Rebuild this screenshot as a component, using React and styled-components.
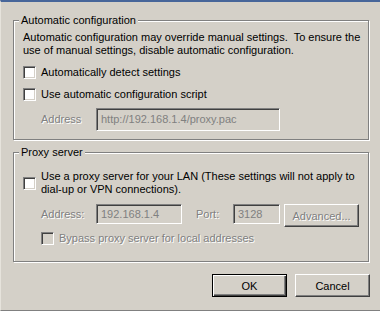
import React from "react";
import styled, { createGlobalStyle, css } from "styled-components";

const GlobalStyle = createGlobalStyle`
  html, body { margin: 0; padding: 0; background: #d4d0c8; }
  body { font-family: "Liberation Sans", Arial, sans-serif; font-size: 11px; color: #000; }
`;

const Window = styled.div`
  box-sizing: border-box;
  width: 380px;
  height: 311px;
  background: #d4d0c8;
  border-top: 2px solid #47669a;
  border-left: 1px solid #e6e3dc;
  border-bottom: 1px solid #808080;
  padding: 18px 10px 0 12px;
  display: flex;
  flex-direction: column;
`;

const Group = styled.div`
  position: relative;
  box-sizing: border-box;
  margin-right: 1px;
  border: 1px solid #808080;
  box-shadow: 1px 1px 0 #fff, inset 1px 1px 0 #fff;
  padding: ${(p) => p.$pad};
  margin-bottom: ${(p) => p.$mb || "0"};
  display: flex;
  flex-direction: column;
`;

const Legend = styled.span`
  position: absolute;
  top: -7px;
  left: 5px;
  padding: 0 2px;
  background: #d4d0c8;
  line-height: 13px;
`;

const Description = styled.p`
  margin: 0;
  line-height: 13px;
  white-space: pre;
`;

const CheckRow = styled.label`
  display: flex;
  align-items: center;
  margin-left: ${(p) => p.$indent || "0"};
  margin-top: ${(p) => p.$mt || "0"};
`;

const CheckBox = styled.span`
  box-sizing: border-box;
  flex: none;
  width: 13px;
  height: 13px;
  border: 1px solid;
  border-color: #808080 #fff #fff #808080;
  box-shadow: inset 1px 1px 0 #404040, inset -1px -1px 0 #d4d0c8;
  background: ${(p) => (p.$disabled ? "#d4d0c8" : "#fff")};
  margin-right: 5px;
`;

const disabledText = css`
  color: #808080;
  text-shadow: 1px 1px 0 #fff;
`;

const Label = styled.span`
  line-height: 13px;
  white-space: pre;
  ${(p) => p.$disabled && disabledText}
`;

const FieldRow = styled.div`
  display: flex;
  align-items: flex-start;
  margin-left: ${(p) => p.$indent || "0"};
  margin-top: ${(p) => p.$mt || "0"};
`;

const FieldLabel = styled.span`
  flex: none;
  width: ${(p) => p.$width};
  height: ${(p) => p.$h};
  line-height: ${(p) => p.$h};
  margin-left: ${(p) => p.$ml || "0"};
  ${disabledText}
`;

const TextBox = styled.div`
  box-sizing: border-box;
  flex: none;
  width: ${(p) => p.$width};
  height: ${(p) => p.$h};
  border: 1px solid;
  border-color: #808080 #fff #fff #808080;
  box-shadow: inset 1px 1px 0 #404040, inset -1px -1px 0 #d4d0c8;
  background: #d4d0c8;
  color: #808080;
  padding-left: 4px;
  line-height: ${(p) => `calc(${p.$h} - 2px)`};
  white-space: pre;
  overflow: hidden;
`;

const Button = styled.button`
  box-sizing: border-box;
  flex: none;
  width: 75px;
  height: 23px;
  margin: 0;
  margin-left: ${(p) => p.$ml || "0"};
  padding: 0;
  font: inherit;
  font-size: 11px;
  background: #d4d0c8;
  color: #000;
  ${(p) =>
    p.$default
      ? css`
          border: 1px solid #000;
          box-shadow: inset 1px 1px 0 #fff, inset -1px -1px 0 #404040,
            inset -2px -2px 0 #808080;
        `
      : css`
          border: 1px solid;
          border-color: #fff #404040 #404040 #fff;
          box-shadow: inset -1px -1px 0 #808080;
        `}
  ${(p) => p.$disabled && disabledText}
`;

const ButtonBar = styled.div`
  display: flex;
  justify-content: flex-end;
  margin-top: 12px;
`;

export default function App() {
  return (
    <>
      <GlobalStyle />
      <Window>
        <Group $pad="10px 9px 8px 9px" $mb="12px">
          <Legend>Automatic configuration</Legend>
          <Description>
            {"Automatic configuration may override manual settings.  To ensure the"}
            <br />
            {"use of manual settings, disable automatic configuration."}
          </Description>
          <CheckRow $mt="9px">
            <CheckBox />
            <Label>Automatically detect settings</Label>
          </CheckRow>
          <CheckRow $mt="9px">
            <CheckBox />
            <Label>Use automatic configuration script</Label>
          </CheckRow>
          <FieldRow $indent="18px" $mt="7px">
            <FieldLabel $width="55px" $h="23px">Address</FieldLabel>
            <TextBox $width="184px" $h="23px">http://192.168.1.4/proxy.pac</TextBox>
          </FieldRow>
        </Group>
        <Group $pad="17px 9px 16px 9px">
          <Legend>Proxy server</Legend>
          <CheckRow>
            <CheckBox />
            <Label>
              {"Use a proxy server for your LAN (These settings will not apply to"}
              <br />
              {"dial-up or VPN connections)."}
            </Label>
          </CheckRow>
          <FieldRow $indent="18px" $mt="8px">
            <FieldLabel $width="55px" $h="20px">Address:</FieldLabel>
            <TextBox $width="86px" $h="20px">192.168.1.4</TextBox>
            <FieldLabel $width="37px" $h="20px" $ml="14px">Port:</FieldLabel>
            <TextBox $width="47px" $h="20px">3128</TextBox>
            <Button $ml="4px" $disabled>Advanced...</Button>
          </FieldRow>
          <CheckRow $indent="18px" $mt="5px">
            <CheckBox $disabled />
            <Label $disabled>Bypass proxy server for local addresses</Label>
          </CheckRow>
        </Group>
        <ButtonBar>
          <Button $default>OK</Button>
          <Button $ml="8px">Cancel</Button>
        </ButtonBar>
      </Window>
    </>
  );
}
